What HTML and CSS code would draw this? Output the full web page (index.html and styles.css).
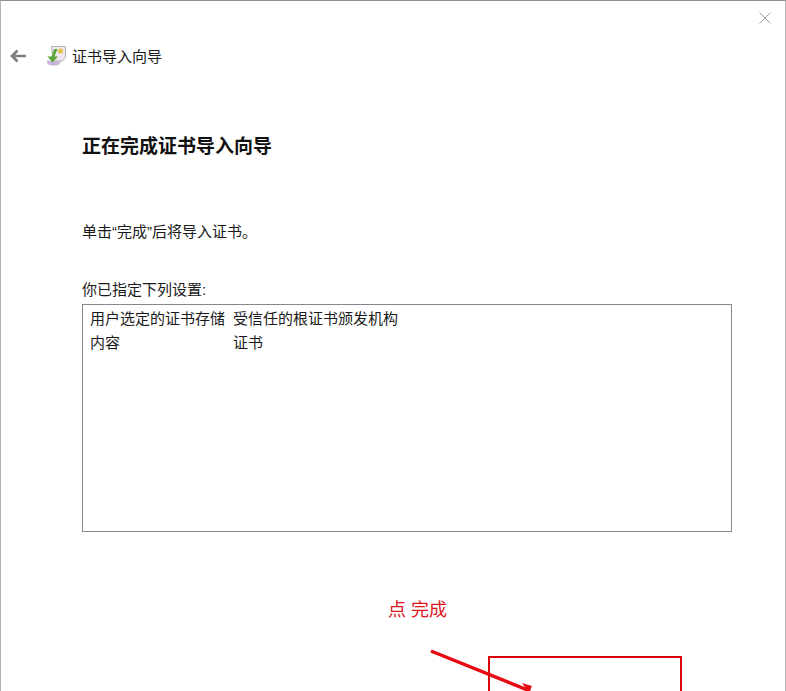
FILE: index.html
```html
<!DOCTYPE html>
<html lang="zh-CN">
<head>
    <meta charset="UTF-8">
    <meta name="viewport" content="width=device-width, initial-scale=1.0">
    <title>证书导入向导</title>
    <link rel="stylesheet" href="styles.css">
</head>
<body>
    <div class="window">
        <div class="close-row">
            <svg class="close-icon" width="12" height="12" viewBox="0 0 12 12">
                <path d="M0.5 0.5L11.5 11.5M11.5 0.5L0.5 11.5" stroke="#a0a0a0" stroke-width="1" fill="none"/>
            </svg>
        </div>
        <div class="nav-row">
            <svg class="back-icon" width="16" height="14" viewBox="0 0 16 14">
                <path d="M7.5 1.5L2 7L7.5 12.5M2 7H16" stroke="#7c7c7c" stroke-width="2.6" fill="none"/>
            </svg>
            <svg class="wizard-icon" width="21" height="22" viewBox="0 0 21 22">
                <path d="M5.5 1.5H19.5V13L16 16H7z" fill="#efe6ef" stroke="#b5b5ae"/>
                <circle cx="14.5" cy="6" r="2.6" fill="#e8c34a"/>
                <path d="M7 20.5C2 20.5 0 18 1.5 15.5L15 16.5C13.5 20 11 21 7 20.5z" fill="#c9b4dc"/>
                <path d="M8 4L5.5 11.5H1.5L6.5 17.5L12 11.5H8.5L11.5 4z" fill="#5aa63c"/>
            </svg>
            <span class="nav-title">证书导入向导</span>
        </div>
        <div class="content">
            <h1 class="page-title">正在完成证书导入向导</h1>
            <p class="intro">单击“完成”后将导入证书。</p>
            <p class="list-label">你已指定下列设置:</p>
            <div class="settings-box">
                <div class="settings-row">
                    <span class="settings-key">用户选定的证书存储</span>
                    <span>受信任的根证书颁发机构</span>
                </div>
                <div class="settings-row">
                    <span class="settings-key">内容</span>
                    <span>证书</span>
                </div>
            </div>
        </div>
        <p class="note">点 完成</p>
        <div class="highlight"></div>
        <svg class="arrow" width="120" height="50" viewBox="0 0 120 50">
            <path d="M2 2L101 42" stroke="#e60b12" stroke-width="3.4" fill="none"/>
            <path d="M93 34L103 37L100 44z" fill="#e60b12"/>
        </svg>
    </div>
</body>
</html>
```

FILE: styles.css
```css
html, body {
    margin: 0;
    padding: 0;
    background-color: #fff;
}

body {
    font-family: "Liberation Sans", "Noto Sans CJK SC", sans-serif;
    color: #1a1a1a;
    overflow: hidden;
}

.window {
    position: relative;
    box-sizing: border-box;
    height: 691px;
    overflow: hidden;
    background-color: #fff;
    border-top: 1px solid #8c8c8c;
    border-left: 1px solid #b4b4b4;
    border-right: 1px solid #b4b4b4;
}

.close-row {
    display: flex;
    justify-content: flex-end;
    padding: 11px 14px 0 0;
    height: 21px;
}

.nav-row {
    display: flex;
    align-items: center;
    height: 24px;
    margin-top: 11px;
    padding-left: 9px;
}

.wizard-icon {
    margin-left: 20px;
}

.nav-title {
    margin-left: 5px;
    padding-bottom: 2px;
    font-size: 15px;
}

.content {
    padding: 0 53px 0 81px;
}

.page-title {
    margin: 66px 0 0;
    font-size: 19px;
    line-height: 26px;
    font-weight: 700;
    color: #111;
}

.intro {
    margin: 62px 0 0;
    font-size: 15px;
    line-height: 20px;
}

.list-label {
    margin: 38px 0 0;
    font-size: 15px;
    line-height: 20px;
}

.settings-box {
    box-sizing: border-box;
    height: 228px;
    margin-top: 4px;
    padding: 2px 7px;
    border: 1px solid #828790;
}

.settings-row {
    display: flex;
    font-size: 15px;
    line-height: 24px;
}

.settings-key {
    width: 143px;
}

.note {
    margin: 66px 0 0 387px;
    font-size: 18px;
    line-height: 24px;
    color: #e0141c;
}

.highlight {
    position: absolute;
    left: 487px;
    top: 655px;
    width: 194px;
    height: 60px;
    box-sizing: border-box;
    border: 2px solid #d9000b;
}

.arrow {
    position: absolute;
    left: 428px;
    top: 648px;
}
```
